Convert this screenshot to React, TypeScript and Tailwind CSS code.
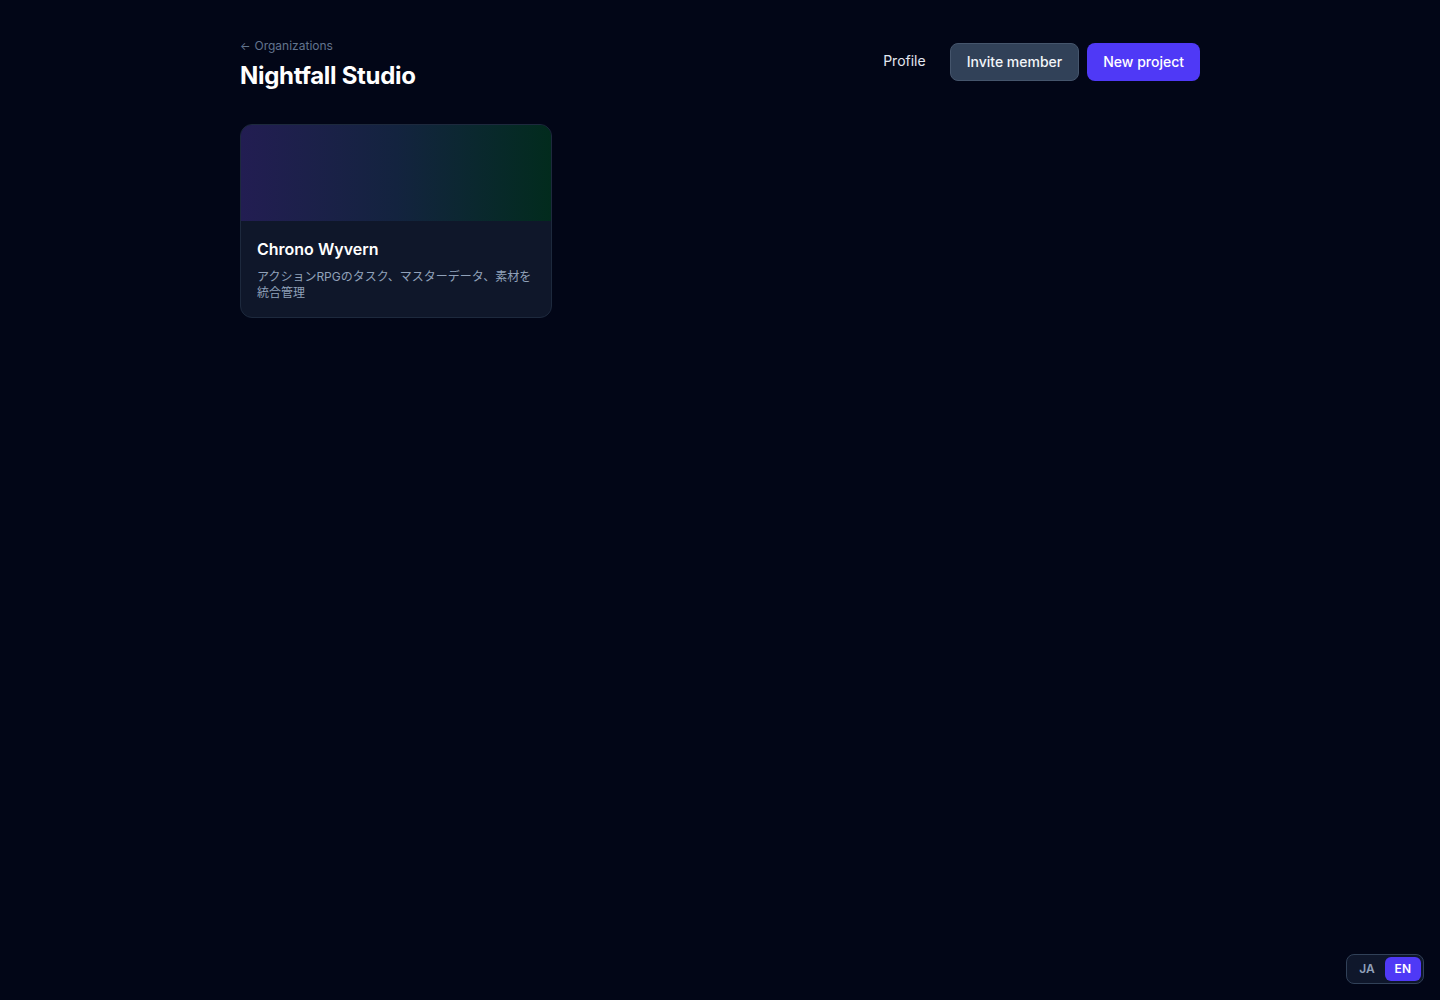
import { useState } from "react";

const projects = [
  {
    name: "Chrono Wyvern",
    description: "アクションRPGのタスク、マスターデータ、素材を統合管理",
  },
];

export default function App() {
  const [lang, setLang] = useState<"ja" | "en">("en");

  return (
    <div
      className="min-h-screen bg-[#020617] text-slate-100"
      style={{ fontFamily: 'Inter, "Noto Sans CJK JP", sans-serif' }}
    >
      <main className="mx-auto max-w-[960px] pt-[38px]">
        <header className="flex items-start justify-between">
          <div>
            <a className="flex items-center gap-1 text-xs text-slate-500" href="#">
              <span className="text-[11px]">←</span>
              Organizations
            </a>
            <h1 className="mt-[6px] text-2xl font-bold tracking-[-0.0125em] text-white">Nightfall Studio</h1>
          </div>
          <div className="mt-[5px] flex items-center gap-2">
            <button className="-mt-0.5 px-4 py-2 text-sm text-slate-200">Profile</button>
            <button className="h-[38px] rounded-lg border border-slate-600 bg-slate-700 px-4 text-sm font-medium text-slate-100">
              Invite member
            </button>
            <button className="h-[38px] rounded-lg bg-indigo-600 px-4 text-sm font-medium text-white">
              New project
            </button>
          </div>
        </header>

        <section className="mt-[32px] grid grid-cols-3 gap-3">
          {projects.map((p) => (
            <div key={p.name} className="overflow-hidden rounded-xl border border-slate-800 bg-[#0f172a]">
              <div className="h-24 bg-gradient-to-r from-[#221d52] via-[#13233f] to-[#022b1d]" />
              <div className="px-4 pt-4 pb-4">
                <h2 className="text-base font-semibold text-white">{p.name}</h2>
                <p className="mt-2 text-xs leading-4 text-slate-400">{p.description}</p>
              </div>
            </div>
          ))}
        </section>
      </main>

      <div className="fixed right-4 bottom-4 flex items-center rounded-lg border border-slate-700 bg-slate-900 p-0.5">
        <button
          onClick={() => setLang("ja")}
          className={
            lang === "ja"
              ? "rounded-md bg-indigo-600 px-2.5 py-1 text-xs font-semibold text-white"
              : "rounded-md px-2.5 py-1 text-xs font-semibold text-slate-400"
          }
        >
          JA
        </button>
        <button
          onClick={() => setLang("en")}
          className={
            lang === "en"
              ? "rounded-md bg-indigo-600 px-2.5 py-1 text-xs font-semibold text-white"
              : "rounded-md px-2.5 py-1 text-xs font-semibold text-slate-400"
          }
        >
          EN
        </button>
      </div>
    </div>
  );
}
